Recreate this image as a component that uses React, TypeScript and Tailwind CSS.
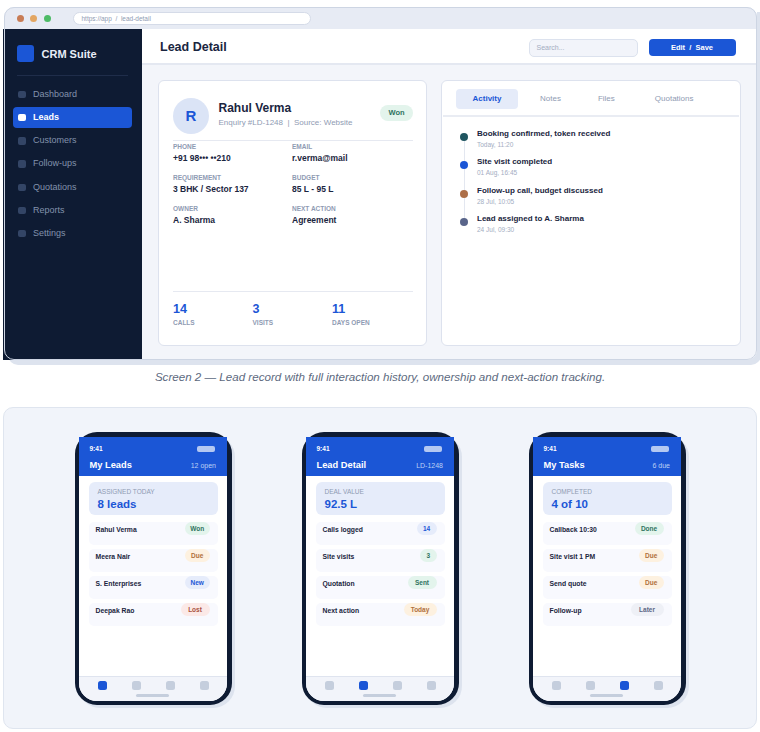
import React from 'react';

const navItems = ['Dashboard', 'Leads', 'Customers', 'Follow-ups', 'Quotations', 'Reports', 'Settings'];

const fields = [
  ['PHONE', '+91 98••• ••210'],
  ['EMAIL', 'r.verma@mail'],
  ['REQUIREMENT', '3 BHK / Sector 137'],
  ['BUDGET', '85 L - 95 L'],
  ['OWNER', 'A. Sharma'],
  ['NEXT ACTION', 'Agreement'],
];

const stats = [
  ['14', 'CALLS'],
  ['3', 'VISITS'],
  ['11', 'DAYS OPEN'],
];

const activity = [
  { title: 'Booking confirmed, token received', time: 'Today, 11:20', dot: 'bg-[#1f5560]' },
  { title: 'Site visit completed', time: '01 Aug, 16:45', dot: 'bg-[#1b56d6]' },
  { title: 'Follow-up call, budget discussed', time: '28 Jul, 10:05', dot: 'bg-[#ad6f48]' },
  { title: 'Lead assigned to A. Sharma', time: '24 Jul, 09:30', dot: 'bg-[#59658a]' },
];

const badgeStyles: Record<string, string> = {
  green: 'bg-[#e3f4ec] text-[#2f7360]',
  orange: 'bg-[#fdf1e0] text-[#b0703c]',
  blue: 'bg-[#e6ecfb] text-[#1b56d6]',
  red: 'bg-[#fbe9e7] text-[#a8503f]',
  gray: 'bg-[#eef0f6] text-[#5b6785]',
};

type Phone = {
  title: string;
  aside: string;
  label: string;
  value: string;
  active: number;
  rows: [string, string, string, string][];
};

const phones: Phone[] = [
  {
    title: 'My Leads',
    aside: '12 open',
    label: 'ASSIGNED TODAY',
    value: '8 leads',
    active: 0,
    rows: [
      ['Rahul Verma', 'Won', 'green', 'w-[24.5px]'],
      ['Meera Nair', 'Due', 'orange', 'w-[24.5px]'],
      ['S. Enterprises', 'New', 'blue', 'w-[24.5px]'],
      ['Deepak Rao', 'Lost', 'red', 'w-[29px]'],
    ],
  },
  {
    title: 'Lead Detail',
    aside: 'LD-1248',
    label: 'DEAL VALUE',
    value: '92.5 L',
    active: 1,
    rows: [
      ['Calls logged', '14', 'blue', 'w-[20px]'],
      ['Site visits', '3', 'green', 'w-[16.5px]'],
      ['Quotation', 'Sent', 'green', 'w-[29px]'],
      ['Next action', 'Today', 'orange', 'w-[33px]'],
    ],
  },
  {
    title: 'My Tasks',
    aside: '6 due',
    label: 'COMPLETED',
    value: '4 of 10',
    active: 2,
    rows: [
      ['Callback 10:30', 'Done', 'green', 'w-[29px]'],
      ['Site visit 1 PM', 'Due', 'orange', 'w-[24.5px]'],
      ['Send quote', 'Due', 'orange', 'w-[24.5px]'],
      ['Follow-up', 'Later', 'gray', 'w-[33px]'],
    ],
  },
];

const PhoneMock = ({ phone }: { phone: Phone }) => (
  <div className="w-[157px] h-[273px] rounded-[22px] border-[4px] border-t-[5px] border-r-[5px] border-[#0e1b33] bg-white shadow-[3px_3px_0_#dde3ee] flex flex-col">
    <div className="h-[39px] bg-[#1b56d6] pl-[11px] pr-[12px] pt-[9px] text-white">
      <div className="flex items-center justify-between h-[6px]">
        <span className="text-[6.5px] font-bold">9:41</span>
        <span className="w-[18px] h-[6px] rounded-[2px] bg-[#b4c8f2]" />
      </div>
      <div className="flex items-center justify-between mt-[7px] h-[14px]">
        <span className="text-[9.3px] font-bold">{phone.title}</span>
        <span className="-mr-[1.5px] text-[7px] text-[#bcd0f5]">{phone.aside}</span>
      </div>
    </div>
    <div className="flex-1 pl-[10px] pr-[9px] pt-[6px] flex flex-col">
      <div className="h-[33px] rounded-[6px] bg-[#e6ecfa] px-[9px] pt-[6px]">
        <div className="text-[6.5px] leading-[8px] text-[#8f9bb3]">{phone.label}</div>
        <div className="text-[11.5px] leading-[14px] mt-[1px] font-bold text-[#1b56d6]">{phone.value}</div>
      </div>
      <div className="mt-[7px] flex flex-col gap-[4.5px]">
        {phone.rows.map(([name, status, tone, width]) => (
          <div key={name} className="h-[22.5px] rounded-[5px] bg-[#f8f9fe] pl-[7px] pr-[8px] flex items-start justify-between">
            <span className="text-[6.8px] leading-[15px] font-bold text-[#1a2540]">{name}</span>
            <span className={`h-[13px] rounded-full text-[6.5px] font-bold leading-[13px] text-center ${width} ${badgeStyles[tone]}`}>
              {status}
            </span>
          </div>
        ))}
      </div>
    </div>
    <div className="h-[25px] rounded-b-[18px] border-t border-[#dfe4ef] bg-[#f2f4fa] flex flex-col items-center">
      <div className="w-full pl-[19.5px] pr-[17.5px] pt-[4px] flex justify-between">
        {[0, 1, 2, 3].map((i) => (
          <span key={i} className={`w-[9px] h-[9px] rounded-[2.5px] ${i === phone.active ? 'bg-[#1b56d6]' : 'bg-[#c5cedd]'}`} />
        ))}
      </div>
      <span className="mt-[4px] w-[33px] h-[3px] rounded-full bg-[#c5cedd]" />
    </div>
  </div>
);

export default function App() {
  return (
    <div className="w-[760px] h-[732px] bg-white overflow-hidden pt-[7px] font-['Liberation_Sans',Arial,sans-serif]">
      {/* desktop window */}
      <div className="relative ml-[4px] w-[753px] h-[353px] flex flex-col shadow-[4px_5px_0_#dde3ee] rounded-b-[10px]">
        <div className="h-[22px] rounded-t-[10px] bg-[#e7ebf4] flex items-center pl-[12.5px]">
          <span className="w-[7px] h-[7px] rounded-full bg-[#c87c55]" />
          <span className="ml-[6.5px] w-[7px] h-[7px] rounded-full bg-[#e3a662]" />
          <span className="ml-[6.5px] w-[7px] h-[7px] rounded-full bg-[#4dbb66]" />
          <div className="ml-[22px] w-[238px] h-[13px] rounded-full bg-white border border-[#d5dbe8] pl-[8px] text-[6.5px] leading-[11px] text-[#8f9bb3]">
            https://app&nbsp; /&nbsp; lead-detail
          </div>
        </div>
        <div className="flex-1 flex min-h-0">
          {/* sidebar */}
          <div className="w-[139px] -ml-[1px] bg-[#0e1b33] pt-[16px] flex flex-col">
            <div className="flex items-center pl-[14px] h-[17px]">
              <span className="w-[17px] h-[17px] rounded-[3px] bg-[#1b56d6]" />
              <span className="ml-[7.5px] pt-px text-[11px] font-bold text-[#e8edf7]">CRM Suite</span>
            </div>
            <div className="mx-[14px] mt-[13px] h-px bg-[#1f2d4a]" />
            <div className="mt-[8px] px-[10px] flex flex-col gap-[2.2px]">
              {navItems.map((item) => {
                const on = item === 'Leads';
                return (
                  <div key={item} className={`h-[21px] rounded-[4px] pl-[5px] flex items-center ${on ? 'bg-[#1b56d6]' : ''}`}>
                    <span className={`w-[7.5px] h-[7.5px] rounded-[2px] ${on ? 'bg-white' : 'bg-[#334566]'}`} />
                    <span className={`ml-[7.5px] text-[9px] ${on ? 'font-bold text-white' : 'text-[#8292ac]'}`}>{item}</span>
                  </div>
                );
              })}
            </div>
          </div>
          {/* main */}
          <div className="flex-1 bg-[#f3f5fa] rounded-br-[10px] flex flex-col">
            <div className="h-[36px] bg-white border-b-[2px] border-[#e4e8f1] flex items-center pt-[3px] pl-[18px] pr-[21.5px]">
              <span className="text-[12.5px] font-bold text-[#1a2540]">Lead Detail</span>
              <div className="ml-auto w-[109px] h-[18px] rounded-[5px] bg-[#f2f4fa] border border-[#dce2ee] pl-[7px] text-[7px] leading-[16px] text-[#a3adc2]">
                Search...
              </div>
              <div className="ml-[11px] w-[87px] h-[17px] rounded-[4px] bg-[#1b56d6] text-white text-[7.5px] leading-[17px] font-bold text-center">
                Edit&nbsp; /&nbsp; Save
              </div>
            </div>
            <div className="flex-1 px-[16px] pt-[15px] pb-[14px] flex gap-[14px] min-h-0">
              {/* lead card */}
              <div className="w-[269px] rounded-[6px] bg-white border border-[#dde2ee] pl-[14px] pr-[13px] pt-[17px] flex flex-col">
                <div className="flex items-start h-[43px] border-b border-[#e6e9f1]">
                  <span className="w-[36px] h-[36px] rounded-full bg-[#dbe4f6] text-[#1b56d6] text-[15px] font-bold leading-[36px] text-center">R</span>
                  <div className="ml-[9.5px] pt-[3px]">
                    <div className="text-[12px] leading-[15px] font-bold text-[#1a2540]">Rahul Verma</div>
                    <div className="mt-[0.5px] text-[8px] leading-[11px] text-[#8f9bb3]">Enquiry #LD-1248&nbsp; |&nbsp; Source: Website</div>
                  </div>
                  <span className="ml-auto mt-[7px] w-[33px] h-[16px] rounded-full bg-[#e3f4ec] text-[#2f7360] text-[7.5px] leading-[16px] font-bold text-center">Won</span>
                </div>
                <div className="mt-[2px] grid grid-cols-[119px_1fr] auto-rows-[31px]">
                  {fields.map(([label, value]) => (
                    <div key={label}>
                      <div className="text-[6.5px] leading-[8px] font-bold text-[#8f9bb3]">{label}</div>
                      <div className="mt-[1.5px] text-[8.5px] leading-[11px] font-bold text-[#1a2540]">{value}</div>
                    </div>
                  ))}
                </div>
                <div className="mt-auto h-[54px] border-t border-[#e6e9f1] pt-[10px] grid grid-cols-[79.5px_79.5px_1fr]">
                  {stats.map(([value, label]) => (
                    <div key={label}>
                      <div className="text-[12.5px] leading-[15px] font-bold text-[#1b56d6]">{value}</div>
                      <div className="mt-[1.5px] text-[6.5px] leading-[8px] font-bold text-[#8f9bb3]">{label}</div>
                    </div>
                  ))}
                </div>
              </div>
              {/* activity card */}
              <div className="w-[300px] rounded-[6px] bg-white border border-[#dde2ee] flex flex-col">
                <div className="mx-px h-[36px] border-b-[2px] border-[#e9ecf3] flex items-start pt-[8px] pl-[13px] text-[8px] text-[#8f9bb3]">
                  <span className="w-[62px] h-[20px] rounded-[4px] bg-[#e5ebf9] text-[#1b56d6] font-bold leading-[20px] text-center">Activity</span>
                  <span className="ml-[22px] leading-[20px]">Notes</span>
                  <span className="ml-[37px] leading-[20px]">Files</span>
                  <span className="ml-[40px] leading-[20px]">Quotations</span>
                </div>
                <div className="relative pl-[18px] pt-[11px]">
                  <div className="absolute left-[22px] top-[20px] w-px h-[85px] bg-[#e3e7f0]" />
                  <div className="flex flex-col gap-[6px]">
                    {activity.map((a) => (
                      <div key={a.title} className="relative h-[22.4px] flex">
                        <span className={`relative mt-[5px] w-[8px] h-[8px] rounded-full ${a.dot}`} />
                        <div className="ml-[9px]">
                          <div className="text-[8px] leading-[11px] font-bold text-[#1a2540]">{a.title}</div>
                          <div className="mt-[1px] text-[6.5px] leading-[10px] text-[#a3adc2]">{a.time}</div>
                        </div>
                      </div>
                    ))}
                  </div>
                </div>
              </div>
            </div>
          </div>
        </div>
        {/* window outline sits over the square sidebar */}
        <div className="absolute inset-0 rounded-[10px] border border-[#cdd5e3] pointer-events-none" />
      </div>

      <p className="mt-[10px] text-center text-[11.6px] leading-[14px] italic text-[#5d6a80]">
        Screen 2 — Lead record with full interaction history, ownership and next-action tracking.
      </p>

      {/* mobile panel */}
      <div className="mt-[23px] ml-[3px] w-[754px] h-[322px] rounded-[10px] bg-[#f1f4fa] border border-[#dfe5ef] pt-[24px] flex justify-center gap-[70px]">
        {phones.map((p) => (
          <PhoneMock key={p.title} phone={p} />
        ))}
      </div>
    </div>
  );
}
